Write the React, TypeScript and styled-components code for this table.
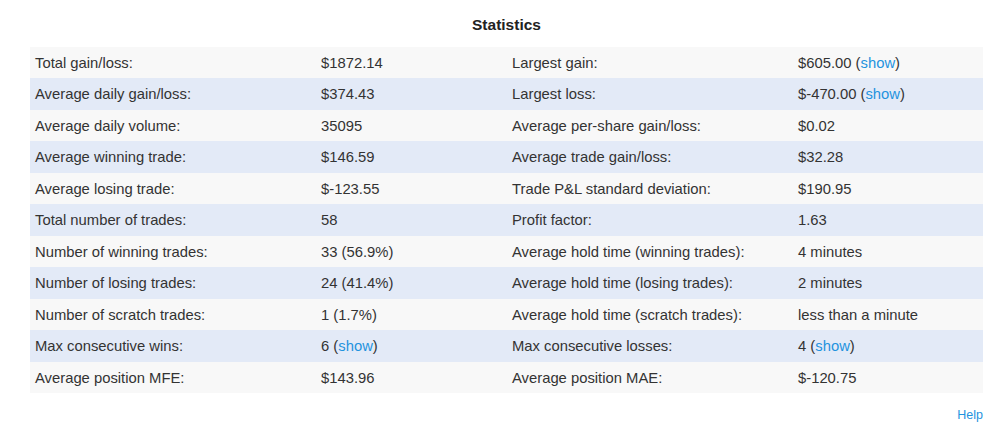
import React from "react";
import styled, { createGlobalStyle } from "styled-components";

const Global = createGlobalStyle`
  html, body { margin: 0; padding: 0; background: #fff; }
  body { font-family: "Liberation Sans", Arial, Helvetica, sans-serif; color: #333; }
`;

const Page = styled.div`
  width: 1000px;
  padding: 14px 17px 0 30px;
  box-sizing: border-box;
`;

const Title = styled.h2`
  margin: 0;
  height: 22px;
  line-height: 22px;
  text-align: center;
  font-size: 15.5px;
  font-weight: bold;
  color: #222;
`;

const Table = styled.div`
  margin-top: 10.7px;
  display: flex;
  flex-direction: column;
`;

const Row = styled.div<{ $alt: boolean }>`
  display: grid;
  grid-template-columns: 286px 191px 286px 190px;
  height: 31.5px;
  background: ${(p) => (p.$alt ? "#e3eaf7" : "#f8f8f8")};
`;

const Cell = styled.div`
  display: flex;
  align-items: center;
  padding-left: 5px;
  padding-top: 1px;
  font-size: 14.8px;
  color: #333;
  white-space: nowrap;
`;

const Link = styled.a`
  color: #1f93de;
  text-decoration: none;
  cursor: pointer;
`;

const Footer = styled.div`
  display: flex;
  justify-content: flex-end;
  margin-top: 15px;
`;

const HelpLink = styled(Link)`
  font-size: 12.5px;
`;

type V = React.ReactNode;

const withShow = (v: string): V => (
  <>
    {v}&nbsp;(<Link>show</Link>)
  </>
);

const rows: [string, V, string, V][] = [
  ["Total gain/loss:", "$1872.14", "Largest gain:", withShow("$605.00")],
  ["Average daily gain/loss:", "$374.43", "Largest loss:", withShow("$-470.00")],
  ["Average daily volume:", "35095", "Average per-share gain/loss:", "$0.02"],
  ["Average winning trade:", "$146.59", "Average trade gain/loss:", "$32.28"],
  ["Average losing trade:", "$-123.55", "Trade P&L standard deviation:", "$190.95"],
  ["Total number of trades:", "58", "Profit factor:", "1.63"],
  ["Number of winning trades:", "33 (56.9%)", "Average hold time (winning trades):", "4 minutes"],
  ["Number of losing trades:", "24 (41.4%)", "Average hold time (losing trades):", "2 minutes"],
  ["Number of scratch trades:", "1 (1.7%)", "Average hold time (scratch trades):", "less than a minute"],
  ["Max consecutive wins:", withShow("6"), "Max consecutive losses:", withShow("4")],
  ["Average position MFE:", "$143.96", "Average position MAE:", "$-120.75"],
];

export default function App() {
  return (
    <Page>
      <Global />
      <Title>Statistics</Title>
      <Table>
        {rows.map((r, i) => (
          <Row key={i} $alt={i % 2 === 1}>
            <Cell>{r[0]}</Cell>
            <Cell>{r[1]}</Cell>
            <Cell>{r[2]}</Cell>
            <Cell>{r[3]}</Cell>
          </Row>
        ))}
      </Table>
      <Footer>
        <HelpLink>Help</HelpLink>
      </Footer>
    </Page>
  );
}
